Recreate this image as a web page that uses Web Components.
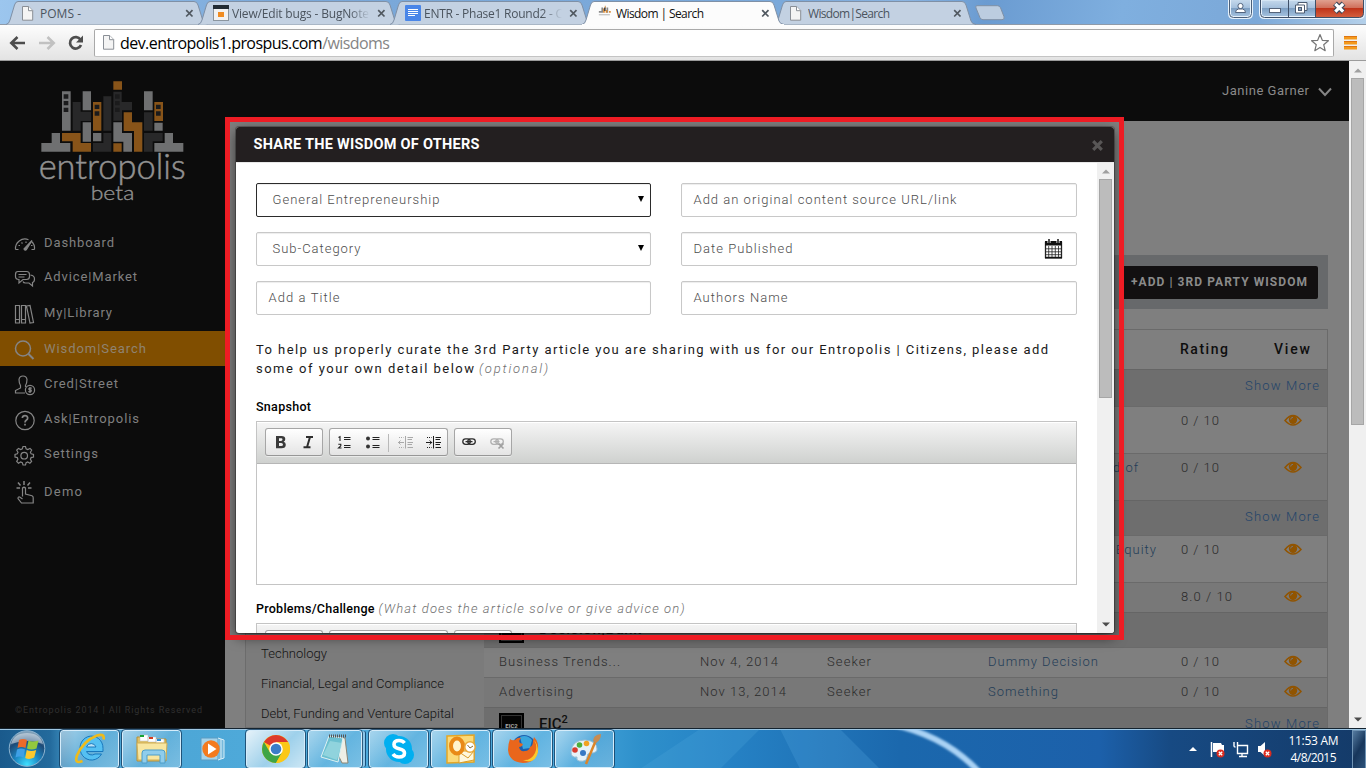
<!DOCTYPE html>
<html lang="en">
<head>
<meta charset="utf-8">
<title>Wisdom | Search</title>
<style>
html,body{margin:0;height:100%;overflow:hidden}
body{display:flex;flex-direction:column;width:1366px;height:768px;font-family:Roboto,sans-serif;background:#7f7f7f}
</style>
</head>
<body>
<tab-strip></tab-strip>
<tool-bar></tool-bar>
<page-view></page-view>
<task-bar></task-bar>
<script>
const define = (name, css, html) => customElements.define(name, class extends HTMLElement {
  connectedCallback() {
    if (this.shadowRoot) return;
    const root = this.attachShadow({ mode: 'open' });
    const tpl = document.createElement('template');
    tpl.innerHTML = `<style>:host,*{box-sizing:border-box}${css}</style>` + (typeof html === 'function' ? html(this) : html);
    root.append(tpl.content.cloneNode(true));
  }
});

/* One line of text, tracked so that it fills the width given in "w". */
const lines = [];
customElements.define('fit-text', class extends HTMLElement {
  connectedCallback() {
    if (this.shadowRoot) return;
    this.attachShadow({ mode: 'open' }).innerHTML = '<style>:host{display:inline-block;white-space:pre}</style><slot></slot>';
    lines.push(this);
  }
  fit() {
    this.style.letterSpacing = '0';
    const natural = this.getBoundingClientRect().width;
    const n = this.textContent.length;
    const space = (this.getAttribute('w') - natural) / (n - 1);
    this.style.letterSpacing = space + 'px';
    this.style.marginRight = -space + 'px';
  }
});

const pageIcon = '<svg width="13" height="15" viewBox="0 0 13 15" style="display:block"><path d="M1.5.5h6.2l4 4v9.700H1.500z" fill="#f4f4f4" stroke="#8a8f96"/><path d="M7.500.5v4.200h4.200" fill="#fff" stroke="#8a8f96"/></svg>';

/* ---------- browser tabs ---------- */
define('browser-tab', `
:host{display:block;position:relative;flex:none;width:192px;height:25px;font:12px/15px "Open Sans","Noto Sans",sans-serif;color:#4b545e}
:host([active]){z-index:2;color:#111}
.shape{position:absolute;left:-6px;top:0}
.row{position:relative;display:flex;align-items:center;height:25px;padding:1px 0 0 11px}
.icon{width:19px;flex:none}
.label{flex:1;overflow:hidden}
.fade{-webkit-mask-image:linear-gradient(90deg,#000 118px,transparent 138px)}
.close{width:9px;margin-right:8px;flex:none}`,
el => `<svg class="shape" width="206" height="25"><path d="M2 24.500Q5 24 6 20L10.500 5Q11.500 1.500 14 1.500H190Q193 1.500 194 5L199 21Q200 24 204 24.500" fill="${el.hasAttribute('active') ? '#fcfcfc' : '#c3d1e2'}" stroke="#7f90a6"/>${el.hasAttribute('active') ? '<path d="M2 24.500H204" stroke="#fcfcfc"/>' : ''}</svg>
<div class="row"><div class="icon"><slot name="icon"></slot></div><div class="label ${el.hasAttribute('long') ? 'fade' : ''}"><slot></slot></div>
<svg class="close" width="9" height="9" viewBox="0 0 9 9"><path d="M1.200 1.200 7.500 7.500M7.500 1.200 1.200 7.500" stroke="#505860" stroke-width="1.700"/></svg></div>`);

define('window-buttons', `
:host{display:flex;height:19px;margin-left:auto;padding-right:1px;position:relative;z-index:3}
svg{display:block}`,
`<svg width="137" height="20" viewBox="0 0 137 20">
<defs><linearGradient id="g" x2="0" y2="1"><stop offset="0" stop-color="#c9dcee"/><stop offset=".5" stop-color="#a3bfdc"/><stop offset=".5" stop-color="#7d9fc3"/><stop offset="1" stop-color="#a9c6e2"/></linearGradient>
<linearGradient id="r" x2="0" y2="1"><stop offset="0" stop-color="#e2a796"/><stop offset=".5" stop-color="#cf6d58"/><stop offset=".5" stop-color="#bf3319"/><stop offset="1" stop-color="#d4603f"/></linearGradient></defs>
<path d="M1.500-1v14.500q0 4 4 4h14q4 0 4-4V-1" fill="url(#g)" stroke="#e6f1fb" stroke-width="3"/><path d="M1.500-1v14.500q0 4 4 4h14q4 0 4-4V-1" fill="none" stroke="#4b5f79"/>
<circle cx="12.500" cy="6" r="2.600" fill="#fff" stroke="#53657f" /><path d="M7.500 12.500q0-3 3-3.500h4q3 .5 3 3.500z" fill="#fff" stroke="#53657f"/>
<path d="M32.500-1v14.500q0 4 4 4h95q4 0 4-4V-1z" fill="url(#g)" stroke="#e6f1fb" stroke-width="3"/>
<path d="M88-1v18.500h44q3.500-.5 3.500-4V-1z" fill="url(#r)"/>
<path d="M32.500-1v14.500q0 4 4 4h95q4 0 4-4V-1M60.500 0v17M87.500 0v17" fill="none" stroke="#3f5068"/>
<rect x="41.500" y="8.500" width="11" height="4" fill="#fff" stroke="#55647a"/>
<path d="M70 2.500h9v8h-9z" fill="#fff" stroke="#4d5c72"/><path d="M67.500 5h9v8h-9z" fill="#fff" stroke="#4d5c72"/><rect x="70.500" y="7.500" width="3" height="3" fill="#8aa4c2" stroke="#4d5c72"/>
<path d="M107 3.500 115.500 12M115.500 3.500 107 12" stroke="#3d4759" stroke-width="5.400"/><path d="M107.300 3.800 115.200 11.700M115.200 3.800 107.300 11.700" stroke="#fff" stroke-width="3.200"/></svg>`);

define('tab-strip', `
:host{display:flex;height:25px;flex:none;position:relative;padding-left:10px;border-bottom:1px solid #8f9aa8;background:linear-gradient(100deg,#9cc6ee 0,#7aa8d9 20%,#7ba9da 58%,#8ab4e1 66%,#6a9bd1 72%,#7fafdf 82%,#7ba8d8 92%,#b4d0ea 100%)}
.new{flex:none;margin:5px 0 0 4px;display:block}`,
`<browser-tab><span slot="icon">${pageIcon}</span><fit-text w="41">POMS -</fit-text></browser-tab>
<browser-tab long><svg slot="icon" width="16" height="16" viewBox="0 0 16 16" style="display:block"><rect x=".5" y=".5" width="15" height="15" fill="#f2f2f2" stroke="#8b959f"/><rect width="16" height="4" fill="#222b33"/><rect x="5" y="7" width="6" height="5" fill="#f08c22"/></svg><fit-text w="137">View/Edit bugs - BugNote</fit-text></browser-tab>
<browser-tab long><svg slot="icon" width="16" height="16" viewBox="0 0 16 16" style="display:block"><rect width="16" height="16" rx="1" fill="#4a86e8"/><path d="M3 4.500h10M3 6.500h10M3 8.500h10M3 10.500h7" stroke="#fff"/></svg><fit-text w="139">ENTR - Phase1 Round2 - C</fit-text></browser-tab>
<browser-tab active><svg slot="icon" width="16" height="16" viewBox="0 0 16 16" style="display:block"><g transform="translate(1 0) scale(.85)"><path d="M4 3h2v6H4zM10 3h2v6h-2zM1 7h3v2H1z" fill="#8a8a8a"/><path d="M6 4h2v5H6zM8 1h1v3H8zM9 6h2v3H9zM13 7h2v2h-2z" fill="#d98a35"/><path d="M7 3h2v4H7z" fill="#444"/><path d="M1 11.500h13" stroke="#aaa"/></g></svg><fit-text w="88">Wisdom | Search</fit-text></browser-tab>
<browser-tab><span slot="icon">${pageIcon}</span><fit-text w="82">Wisdom|Search</fit-text></browser-tab>
<svg class="new" width="32" height="16" viewBox="0 0 32 16"><path d="M3 .700h20.500q2 0 3 2l3.500 9q1 3-2 3H9q-2 0-3-2L2 3Q1 .700 3 .700z" fill="#bccde0" stroke="#7f90a6"/></svg>
<window-buttons></window-buttons>`);

define('tool-bar', `
:host{display:flex;align-items:center;flex:none;height:36px;padding-left:9px;border-bottom:1px solid #9b9b9b;background:linear-gradient(#fdfdfd,#e3e3e3)}
svg{display:block;flex:none}
.box{display:flex;align-items:center;width:1240px;height:28px;margin:0 10px;padding:0 3px 0 7px;border:1px solid #a9a9a9;border-bottom-color:#c4c4c4;border-radius:2px;background:#fff;font:16px/22px "Open Sans","Noto Sans",sans-serif;color:#000}
.box i{font-style:normal;color:#858585}
.star{margin-left:auto}`,
`<svg width="75" height="18" viewBox="0 0 75 18"><g fill="none"><path d="M2 9h14M8.500 3 2.300 9l6.200 6" stroke="#4d4d4d" stroke-width="2.600"/><path d="M30 9h14M38.500 3l6.200 6-6.200 6" stroke="#c1c1c1" stroke-width="2.600"/><path d="M71.500 5.700A5.700 5.700 0 1 0 72 11" stroke="#4d4d4d" stroke-width="2.700"/></g><path d="M74 1.500v7h-7z" fill="#4d4d4d"/></svg>
<div class="box">${pageIcon}<span style="width:5px"></span><fit-text w="270">dev.entropolis1.prospus.com<i>/wisdoms</i></fit-text>
<svg class="star" width="20" height="20" viewBox="0 0 20 20"><path d="M10 1.500l2.300 5.800 6.100.4-4.700 4 1.500 6-5.200-3.300-5.200 3.300 1.500-6-4.700-4 6.100-.4z" fill="#fff" stroke="#777" stroke-width="1.200" stroke-linejoin="round"/></svg></div>
<svg width="13" height="14" viewBox="0 0 13 14"><path d="M0 2h13M0 7h13M0 12h13" stroke="#f49a1c" stroke-width="3"/><path d="M0 .500h13M0 5.500h13M0 10.500h13" stroke="#dd7413"/></svg>`);

/* ---------- page ---------- */
define('scroll-track', `
:host{display:flex;flex-direction:column;align-items:center;flex:none;width:17px;background:#f0f0f0;padding:7px 0 6px}
svg{display:block;flex:none}
div{width:13px;margin-top:5px;margin-bottom:auto;background:#bcbcbc;border:1px solid #a6a6a6;flex:none}`,
el => `<svg width="8" height="5"><path d="M0 4.500 4 .500 8 4.500z" fill="#9f9f9f"/></svg><div style="height:${el.getAttribute('thumb')}px"></div><svg width="8" height="5"><path d="M0 .500h8L4 4.500z" fill="#4c4c4c"/></svg>`);

define('brand-logo', ':host{display:block;height:164px;padding-top:1px}svg{display:block}', `
<svg width="225" height="142" viewBox="0 0 675 426">
<g fill="#6f7071"><path d="M186 88h26v118h-26zM248 88h25v57h-25zM248 181h25v58h-25zM279 213h25v25h-25zM432 88h26v57h-26zM463 182h25v24h-25zM340 181h26v32h30v56h-26v-30h-30zM155 213h25v30h31v26h-87v-26h31zM494 213h25v30h31v26h-87v-26h31z"/></g>
<g fill="#282829"><path d="M218 120h24v29h31v28h-31v29h-24zM310 103h24v103h-24zM340 89h25v31h31v25h-30v31h-26zM310 213h24v56h-55v-26h31zM432 151h26v55h-26zM432 213h56v25h-30v31h-26z"/></g>
<g fill="#885419"><path d="M340 58h26v25h-26zM279 120h25v86h-25zM463 120h26v57h-26zM371 151h25v30h31v88h-25v-62h-31zM186 213h56v30h31v26h-55v-31h-32zM340 244h25v25h-25z"/></g>
<g fill="#1b1b1c"><path d="M191 97h14v13h-14zM191 117h14v13h-14zM191 137h14v13h-14zM284 128h14v13h-14zM284 148h14v13h-14zM345 97h14v13h-14zM345 117h14v13h-14zM345 137h14v13h-14zM468 128h14v13h-14zM468 148h14v13h-14z"/></g>
<text x="116" y="352" textLength="441" lengthAdjust="spacingAndGlyphs" font-family="Lato" font-weight="300" font-size="106" fill="#929292" stroke="#929292" stroke-width="1.500">entropolis</text>
<text x="272" y="414" textLength="131" lengthAdjust="spacingAndGlyphs" font-family="Lato" font-weight="300" font-size="56" fill="#929292" stroke="#929292" stroke-width="1">beta</text></svg>`);

define('nav-item', `
:host{display:flex;align-items:center;flex:none;padding-left:14px;font:400 13px/18px Roboto,sans-serif;color:#808080}
:host([active]){background:#804e00;color:#8f8371}
slot[name=icon]{display:block}
.i{width:30px;height:24px;display:flex;margin-top:2px}`,
'<div class="i"><slot name="icon"></slot></div><slot></slot>');

const navIcon = body => `<svg slot="icon" width="22" height="24" viewBox="0 0 22 24" fill="none" stroke="#858585" stroke-width="1.200" style="display:block">${body}</svg>`;
const nav = [
 ['Dashboard', 70, 35, '<path d="M1.500 17.500a9.500 9.500 0 0 1 13-9.800M17 9a9.500 9.500 0 0 1 3.500 8.500M1.500 17.500h3M17.500 17.500h3"/><path d="M10 17 18 8.500 12.500 17.500q-1.500 1.500-2.500-.5z" fill="#858585"/><path d="M4.500 13.500h1.500M7.500 10.500l1 1M12 9.500v1.500M17 13.500h1.500"/>'],
 ['Advice|Market', 93, 34, '<path d="M4 5.500h8.500q3 0 3 3v2q0 3-3 3H9L5 17v-3.500q-3.500 0-3.500-3v-2q0-3 2.500-3zM4.500 8.500h8M4.500 11h6M16.500 9q4 .5 4 4 0 3-2 3.500v3.500l-3.500-3h-3.500q-2 0-2.500-1.500"/>'],
 ['My|Library', 68, 37, '<path d="M1.500 3.500h4v17.500h-4zM7.500 3.500h4v17.500h-4zM12.500 4l3.500-.5 3.500 17-3.500.5zM1.500 17.500h4M7.500 17.500h4"/>'],
 ['Wisdom|Search', 102, 35, '<circle cx="9" cy="10.500" r="7.500" stroke-width="1.500"/><path d="M14.500 16 19.500 21" stroke-width="2"/>'],
 ['Cred|Street', 74, 35, '<path d="M11 20H1.500v-2.500l5-2.500v-2.500Q5 10 5 6.500 5.500 3 9 3t4 3.500q0 3.500-1.500 6v1.500"/><circle cx="16" cy="17" r="4.600"/><path d="M17.800 15.200h-2.500q-1 .8 0 1.600h1.500q1 .9 0 1.900h-2.500M16 14v6"/>'],
 ['Ask|Entropolis', 95, 35, '<circle cx="11" cy="12.500" r="9.200"/><path d="M8.300 10q.3-2.300 2.700-2.300t2.700 2.200q0 1.300-1.500 2.300-1.200.8-1.200 2.300M11 15.800v1.700" stroke-width="1.700"/>'],
 ['Settings', 54, 36, '<path d="M9 3.500h2.500l.6 2.400 1.600.7 2.300-1.200 1.700 1.800-1.300 2.100.7 1.500 2.400.7v2.500l-2.400.6-.7 1.700 1.200 2.200-1.700 1.700-2.200-1.200-1.600.7-.6 2.300H9l-.7-2.300-1.700-.7-2.100 1.200-1.800-1.700 1.200-2.200-.6-1.700-2.300-.6v-2.500l2.300-.7.7-1.500-1.300-2.100 1.800-1.800 2.200 1.200 1.600-.7z"/><circle cx="10.200" cy="12.700" r="3.300"/>'],
 ['Demo', 38, 40, '<path d="M8.500 15.500v-8.500q1.500-1.500 3 0v6l6.500 1.700q1.500.7 1.200 2.300v5H7.500l-3.500-4.500q0-2 1.700-1.500l2.800 2" /><path d="M10 0v4M4 1.500l2.500 3M16 1.500l-2.500 3M2.500 7h3.500M14 7h3.500" stroke-width="1.500"/>']];

define('side-nav', `
:host{display:flex;flex-direction:column;flex:none;width:225px;background:#0c0c0c}
.copy{margin:auto 0 10px 15px;font:9px/16px Roboto,sans-serif;color:#303030}`,
`<brand-logo></brand-logo>` + nav.map((n, i) => `<nav-item ${i === 3 ? 'active' : ''} style="height:${n[2]}px${i === 3 ? ';margin-top:0' : ''}">${navIcon(n[3])}<fit-text w="${n[1]}">${n[0]}</fit-text></nav-item>`).join('') +
`<div class="copy"><fit-text w="187">©Entropolis 2014 | All Rights Reserved</fit-text></div>`);

define('top-bar', `
:host{display:flex;align-items:center;justify-content:flex-end;flex:none;height:60px;padding-right:17px;background:#0c0c0c;font:13px/18px Roboto,sans-serif;color:#8a8a8a}
svg{margin:2px 0 0 9px}`,
`<fit-text w="87">Janine Garner</fit-text><svg width="14" height="10" viewBox="0 0 14 10"><path d="M1 1.500 7 8 13 1.500" fill="none" stroke="#858585" stroke-width="2"/></svg>`);

define('data-row', `
:host{display:grid;grid-template-columns:201px 127px 161px 193px 84px 1fr;flex:none;padding:5px 0 0 15px;border-top:1px solid #6a6a6a;font:300 13px/18px Roboto,sans-serif;color:#2b2b2b;background:#7f7f7f}
:host([alt]){background:#787878}
svg{margin-top:2px;margin-left:18.500px;display:block}
.l{color:#233d57}.over{justify-self:end;margin-right:var(--end,0)}`,
el => { const d = JSON.parse(el.getAttribute('data'));
 return [0, 1, 2, 3, 4].map(i => [d[i], i]).map(([c, i]) => `<div class="${i === 3 ? 'l' : ''} ${el.hasAttribute('tail') && i === 3 ? 'over' : ''}">${c ? `<fit-text w="${c[1]}">${c[0]}</fit-text>` : ''}</div>`).join('') +
 '<svg width="18" height="13" viewBox="0 0 18 13"><path d="M1 6.500Q9-3.500 17 6.500 9 15.500 1 6.500z" fill="none" stroke="#915400" stroke-width="1.500"/><circle cx="9" cy="5.700" r="4.200" fill="#915400"/><path d="M6.700 5.500q0-2.200 2.300-2.200" fill="none" stroke="#777"/></svg>'; });

define('group-row', `
:host{display:flex;flex:none;padding:0 8px 0 15px;border-top:1px solid #656565;background:#6e6e6e;font:500 15px/18px Roboto,sans-serif;color:#0e0e0e}
.icon{width:25px;height:25px;margin:5px 15px 0 0;background:#050505;display:flex;align-items:center;justify-content:center;font:700 6px/8px Roboto,sans-serif;color:#aaa;border:2px solid #000;box-shadow:inset 0 0 0 1px #333}
.name{padding-top:7px}sup{font-size:11px;line-height:0;vertical-align:6px}
.more{margin:7px 0 0 auto;font-weight:300;font-size:13px;color:#23446a}`,
el => (el.hasAttribute('name') ? `<div class="icon">${el.getAttribute('badge') || ''}</div><div class="name">${el.getAttribute('name')}</div>` : '') +
 (el.hasAttribute('more') ? '<div class="more"><fit-text w="74">Show More</fit-text></div>' : ''));

const row = (h, alt, data, tail) => `<data-row ${alt ? 'alt' : ''} ${tail ? `tail style="height:${h}px;--end:${tail}px"` : `style="height:${h}px"`} data='${JSON.stringify(data)}'></data-row>`;
define('page-content', `
:host{display:flex;flex-direction:column;flex:1;min-height:0;padding:134px 21px 0 20px;background:#7f7f7f;overflow:hidden}
.bar{display:flex;justify-content:flex-end;align-items:center;flex:none;height:54px;padding-right:10px;background:#67696b}
.btn{height:33px;padding:8px 11px 0 10px;border-radius:2px;background:#121011;color:#8b8b8b;font:700 12px/17px Roboto,sans-serif}
.cols{display:flex;margin-top:20px;flex:1;min-height:0}
.side{width:239px;flex:none;border:1px solid #6c6c6c;border-right:0;background:#7b7b7b;padding:309px 0 0 15px;font:300 13px/30px Roboto,sans-serif;color:#121212}
.side div{height:30px}
.table{flex:1;display:flex;flex-direction:column;border-right:1px solid #6a6a6a}
.head{display:grid;grid-template-columns:696px 94px 1fr;flex:none;height:40px;border-top:1px solid #6a6a6a;font:500 14px/38px Roboto,sans-serif;color:#0e0e0e}`,
`<div class="bar"><div class="btn"><fit-text w="176">+ADD | 3RD PARTY WISDOM</fit-text></div></div>
<div class="cols"><div class="side"><div><fit-text w="66">Technology</fit-text></div><div><fit-text w="183">Financial, Legal and Compliance</fit-text></div><div><fit-text w="193">Debt, Funding and Venture Capital</fit-text></div></div>
<div class="table"><div class="head"><span></span><div><fit-text w="48">Rating</fit-text></div><div><fit-text w="36">View</fit-text></div></div>
<group-row more style="height:37px"></group-row>` +
row(47, 0, [0,0,0,0,['0 / 10',38]]) + row(47, 1, [0,0,0,['d of',25],['0 / 10',38]], 43) +
`<group-row more style="height:35px"></group-row>` +
row(47, 0, [0,0,0,['Equity',40],['0 / 10',38]], 25) + row(30, 1, [0,0,0,0,['8.0 / 10',51]]) +
`<group-row style="height:35px" name="<fit-text w='102'>Decision|Bank</fit-text>"></group-row>` +
row(30, 0, [['Business Trends...',121],['Nov 4, 2014',78],['Seeker',44],['Dummy Decision',110],['0 / 10',38]]) +
row(30, 1, [['Advertising',74],['Nov 13, 2014',86],['Seeker',44],['Something',70],['0 / 10',38]]) +
`<group-row more style="height:35px" name="EIC<sup>2</sup>" badge="EIC2"></group-row></div></div>`);

/* ---------- dialog ---------- */
define('form-field', `
:host{display:flex;align-items:center;height:34px;padding:0 6px 1px 11.500px;border:1px solid #c8c8c8;border-radius:2px;background:#fff;box-shadow:inset 0 1px 1px rgba(0,0,0,.075);font:300 13px/18px Roboto,sans-serif;color:#4c4c4c}
:host([select]){padding-left:15.500px;padding-bottom:0}
:host([focus]){border-color:#2b2b2b}
svg{margin-left:auto}`,
el => '<slot></slot>' + (el.hasAttribute('select') ? '<svg width="6" height="6" style="margin-top:-2px"><path d="M0 0h6L3 6z" fill="#000"/></svg>' : '') +
 (el.hasAttribute('date') ? '<svg width="20" height="20" viewBox="0 0 20 20" style="margin:1px 6px 0 auto"><path d="M1.500 3.500h16v15h-16z" fill="#fff" stroke="#222" stroke-width="1.300"/><path d="M1 2h17v4.500H1z" fill="#111"/><path d="M5 0v4M14 0v4" stroke="#fff" stroke-width="3"/><path d="M5 0v4M14 0v4" stroke="#111" stroke-width="1.500"/><path d="M4.700 7v11M8 7v11M11.300 7v11M14.500 7v11M2 9.800h15M2 12.800h15M2 15.700h15" stroke="#222" stroke-width=".8"/><path d="M1 18.800h17" stroke="#111" stroke-width="1.500"/></svg>' : ''));

define('rich-editor', `
:host{display:flex;flex-direction:column;flex:none;height:164px;border:1px solid #c4c4c4;background:#fff}
.bar{display:flex;gap:6px;flex:none;height:42px;padding:6px 8px;border-bottom:1px solid #b6b6b6;background:linear-gradient(#f5f5f5,#cfd1cf);box-shadow:inset 0 1px 0 #fff}
.g{height:28px;border:1px solid #a6a6a6;border-bottom-color:#979797;border-radius:3px;background:linear-gradient(#fff,#e4e4e4);box-shadow:0 1px 0 rgba(255,255,255,.5)}
svg{display:block}`,
`<div class="bar">
<div class="g"><svg width="56" height="26" viewBox="0 0 56 26"><path fill-rule="evenodd" d="M10 7h5.500q3.800 0 3.800 3 0 2-1.700 2.700 2.200.6 2.200 3 0 3.500-4.300 3.500H10zM13 9.200v2.700h2q1.500 0 1.500-1.400T15 9.200zM13 14v3h2.200q1.800 0 1.800-1.500T15.200 14z" fill="#3a3a3a"/><path d="M40 8h7M37.500 18.300h7M44 8l-3 10.300" stroke="#2e2e2e" stroke-width="2"/></svg></div>
<div class="g"><svg width="117" height="26" viewBox="0 0 117 26"><path d="M14 8.500h6.500M14 10.500h6.500M14 16.500h6.500M14 18.500h6.500" stroke="#222"/><path d="M8.500 8.500l1.500-.8v4.300M8.300 15.200h2.500v1.600L8.500 19h3" fill="none" stroke="#222" stroke-width="1.100"/><circle cx="38" cy="9.500" r="2" fill="#333"/><circle cx="38" cy="17.500" r="2" fill="#333"/><path d="M42.500 8.500h7M42.500 10.500h7M42.500 16.500h7M42.500 18.500h7" stroke="#222"/><path d="M58.500 5v18" stroke="#b9b9b9"/>
<g stroke="#a9a9a9" fill="none"><path d="M68 13.500h6M70.500 11.500l-2 2 2 2M75.500 7v12.500"/><path d="M77.500 8.500h5.500M77.500 10.500h4.500M77.500 13.500h5.500M77.500 15.500h4.500M77.500 18.500h5.500"/><path d="M69 8.500h4.500M69 18.500h4.500" stroke-dasharray="1 1"/></g>
<g stroke="#1d1d1d" fill="none"><path d="M96 13.500h6M99.700 11.500l2 2-2 2M103.500 7v12.500"/><path d="M105.500 8.500h5.500M105.500 10.500h4.500M105.500 13.500h5.500M105.500 15.500h4.500M105.500 18.500h5.500"/><path d="M97 8.500h4.500M97 18.500h4.500" stroke-dasharray="1 1"/></g></svg></div>
<div class="g"><svg width="56" height="26" viewBox="0 0 56 26"><g fill="none" stroke="#2c2c2c" stroke-width="1.300"><rect x="7.800" y="9.800" width="7.500" height="5.600" rx="2.800"/><rect x="12.800" y="9.800" width="7.500" height="5.600" rx="2.800"/></g><path d="M10.500 12.600h7" stroke="#2c2c2c" stroke-width="1.300"/><g fill="none" stroke="#b0b0b0" stroke-width="1.300"><rect x="35.800" y="9.800" width="7.500" height="5.600" rx="2.800"/><rect x="40.800" y="9.800" width="7.500" height="5.600" rx="2.800"/><path d="M38.500 12.600h6"/></g><path d="M43.500 14.500l5 5M48.500 14.500l-5 5" stroke="#a0a0a0" stroke-width="1.700"/></svg></div></div>`);

define('share-dialog', `
:host{display:flex;flex-direction:column;width:878px;height:506px;border-radius:3px;overflow:hidden;background:#fff;box-shadow:0 4px 13px rgba(0,0,0,.6),0 0 0 1px rgba(0,0,0,.25)}
header{display:flex;align-items:center;justify-content:space-between;flex:none;height:35px;padding:0 11px 0 17.500px;background:#231f20;color:#fff;font:700 14.500px/20px Roboto,sans-serif}
header svg{margin-top:2px}
.wrap{display:flex;flex:1;min-height:0;border-top:1px solid #e8e8e8}
.body{flex:1;display:flex;flex-direction:column;padding:20px 20px 0;overflow:hidden;font:13px/19px Roboto,sans-serif;color:#1a1a1a}
.grid{display:grid;grid-template-columns:395px 396px;gap:15px 30px;flex:none}
.note{margin-top:25px;height:38px;flex:none;white-space:nowrap}
.note em,.lab em{font-weight:300;color:#6f6f6f}
.lab{height:19px;flex:none;font-weight:500;font-size:12.500px;white-space:nowrap;color:#000}
em{display:inline-block}`,
`<header><fit-text w="226">SHARE THE WISDOM OF OTHERS</fit-text><svg width="11" height="11" viewBox="0 0 11 11"><path d="M1.200 1.200 9.800 9.800M9.800 1.200 1.200 9.800" stroke="#585656" stroke-width="3.200"/></svg></header>
<div class="wrap"><div class="body"><div class="grid">
<form-field select focus><fit-text w="167">General Entrepreneurship</fit-text></form-field>
<form-field><fit-text w="263">Add an original content source URL/link</fit-text></form-field>
<form-field select><fit-text w="88">Sub-Category</fit-text></form-field>
<form-field date><fit-text w="99">Date Published</fit-text></form-field>
<form-field><fit-text w="71">Add a Title</fit-text></form-field>
<form-field><fit-text w="94">Authors Name</fit-text></form-field></div>
<div class="note"><fit-text w="792">To help us properly curate the 3rd Party article you are sharing with us for our Entropolis | Citizens, please add</fit-text><br><fit-text w="218">some of your own detail below</fit-text><em style="margin-left:5px"><fit-text w="69">(optional)</fit-text></em></div>
<div class="lab" style="margin:19px 0 5px"><fit-text w="55">Snapshot</fit-text></div>
<rich-editor></rich-editor>
<div class="lab" style="margin:14px 0 5px"><fit-text w="118.500">Problems/Challenge</fit-text><em style="margin-left:4px;font-size:13px"><fit-text w="306">(What does the article solve or give advice on)</fit-text></em></div>
<rich-editor></rich-editor></div>
<scroll-track thumb="219" style="padding-top:6px"></scroll-track></div>`);

define('page-view', `
:host{display:flex;flex:none;height:667px;position:relative;overflow:hidden}
main{flex:1;display:flex;flex-direction:column;min-width:0}
share-dialog{position:absolute;left:236px;top:66px}
.mark{position:absolute;left:225px;top:56px;width:899px;height:523px;border:5px solid #ee1c24}`,
`<side-nav></side-nav><main><top-bar></top-bar><page-content></page-content></main><scroll-track thumb="347"></scroll-track>
<share-dialog></share-dialog><div class="mark"></div>`);

/* ---------- taskbar ---------- */
define('task-button', `
:host{display:flex;align-items:center;justify-content:center;flex:none;width:59px;height:38px;margin-right:3px}
:host([open]){border:1px solid #d5ecfa;border-radius:3px;outline:1px solid rgba(16,55,90,.75);outline-offset:0;background:linear-gradient(135deg,rgba(255,255,255,.5),rgba(255,255,255,.12) 55%,rgba(255,255,255,.25))}
:host([front]){background:linear-gradient(135deg,rgba(255,255,255,.85),rgba(255,255,255,.45) 55%,rgba(255,255,255,.7))}
:host([stack]){width:54px;margin-right:7px;box-shadow:4px 0 0 -1px #8cc6e8,5px 0 0 -1px #17507c}`, '<slot></slot>');

define('task-bar', `
:host{display:flex;align-items:flex-start;position:relative;flex:none;height:40px;border-top:1px solid #14232f;box-shadow:inset 0 1px 0 #9fc7e3;padding-top:1px;overflow:hidden;background:linear-gradient(90deg,#1a5a8c 0,#236a9c 50px,#4ba3d3 75px,#4fabdb 300px,#4ba9dd 560px,#2e90cb 640px,#2683c6 720px,#1b68ad 900px,#1c60aa 1100px,#174a83 1170px,#143a68 1366px)}
.bg{position:absolute;inset:0}
task-button,.tray,.orb{position:relative}
.orb{flex:none;width:60px;height:38px;display:block}
.tray{display:flex;align-items:center;margin-left:auto;height:38px;color:#fff;font:12px/17px "Open Sans","Noto Sans",sans-serif}
.clock{text-align:center;width:75px;height:34px;padding-right:2px}
.clock div{height:17px}
.desk{width:14px;height:39px;border:1px solid #6f93b4;background:linear-gradient(120deg,#557ba0,#17365b 50%,#2c5179)}`,
`<svg class="bg" width="1366" height="39"><defs><filter id="b"><feGaussianBlur stdDeviation="1.200"/></filter></defs><path d="M640 40 700 0h60l-40 40z" fill="#4ea6dd" opacity=".25"/><path d="M800 40 780 0h60l40 40z" fill="#5fb2e6" opacity=".22"/><path d="M890-5Q945 6 980 44" fill="none" stroke="#a9d2f4" stroke-width="6" filter="url(#b)"/></svg>
<svg class="orb" width="60" height="38" viewBox="0 0 60 38"><defs><radialGradient id="a" cx=".5" cy=".95" r=".9"><stop offset="0" stop-color="#3fe0ff"/><stop offset=".4" stop-color="#1b86c2"/><stop offset=".75" stop-color="#1d4a77"/><stop offset="1" stop-color="#7f9fb8"/></radialGradient></defs><circle cx="27" cy="18.500" r="17.800" fill="url(#a)" stroke="#8db4d0"/><path d="M11 14Q14 3 27 3t16 11q-15-6-32 0z" fill="#fff" opacity=".45"/><path d="M19 10q4-2 8 0l-1.500 8q-4-2-8 0z" fill="#ec6a2a"/><path d="M28.500 10.500q4 2.200 10 0l-2 8q-5 2-9.500 0z" fill="#93c83e"/><path d="M17 19.500q4-2 8 0l-1.500 8q-4-2-8 0z" fill="#3fa0e6"/><path d="M26.700 20q4.500 2 9.500 0l-2 7.500q-5 2.500-9 .500z" fill="#fdc82e"/></svg>
<task-button open><svg width="34" height="34" viewBox="0 0 34 34"><path d="M30 16.500A11.500 12 0 1 0 28.500 22h-6.500a5.500 5 0 0 1-8.500-2.500H30z" fill="#55c0f2" stroke="#1878bd"/><path d="M13.500 15a5 5 0 0 1 9.500 0z" fill="#b9e2f8" stroke="#1878bd"/><path d="M30.500 7.500Q32 1 24 3.500 10 9 4 23.500 1 32.500 9.500 29" fill="none" stroke="#eebb1c" stroke-width="2.700"/></svg></task-button>
<task-button open><svg width="34" height="32" viewBox="0 0 34 32"><path d="M2 4h9l2 2h18v22H2z" fill="#e2c265" stroke="#b4903b"/><path d="M5 2h8v6H5zM13 4h8v5h-8zM21 6h8v4h-8z" fill="#fff" stroke="#bbb" stroke-width=".5"/><path d="M5 2h4v2H5z" fill="#19a334"/><path d="M14 4h4v2h-4z" fill="#d33b20"/><path d="M22 6h4v2h-4z" fill="#2a8ed8"/><path d="M2 10h30l-1 17H3z" fill="#f8e6a0" stroke="#cfae56"/><path d="M7 30V20q0-3 3-3h17q3 0 3 3v10h-5v-8H12v8z" fill="#8fcdec" stroke="#4c9dc9"/></svg></task-button>
<task-button><svg width="30" height="26" viewBox="0 0 30 26"><path d="M2 2h17v22H2z" fill="#a5d3ea" stroke="#5a9cc3"/><path d="M19 2l3 1v20l-3 1M22 3l3 1v18l-3 1" fill="#77b9dc" stroke="#d7eef8"/><circle cx="12" cy="13" r="8.700" fill="#f37a1e"/><path d="M9 7.500v11l8.500-5.500z" fill="#fff"/></svg></task-button>
<task-button open front><svg width="30" height="30" viewBox="0 0 30 30"><circle cx="15" cy="15" r="14" fill="#fbc818"/><path d="M15 15 2.900 8A14 14 0 0 1 27.100 8H15z" fill="#dd3a2c"/><path d="M2.900 8A14 14 0 0 0 15 29l6-10.500-12 0z" fill="#3ea546"/><path d="M15 8H27.100A14 14 0 0 1 15 29l6-10.500z" fill="#fbc818"/><circle cx="15" cy="15" r="6.800" fill="#fff"/><circle cx="15" cy="15" r="5.300" fill="#3b7dc8"/></svg></task-button>
<task-button open stack><svg width="34" height="32" viewBox="0 0 34 32"><path d="M11 3l16 2 3 25-6 0z" fill="#efefe6" stroke="#8a8574"/><path d="M11 3 25 5 20 29 3 24z" fill="#6cc0d0" stroke="#dff1f3"/><path d="M12 8 24 10 19 27 5 22z" fill="#a9dfe6" opacity=".6"/><path d="M11 3h17" stroke="#555" stroke-width="3" stroke-dasharray="1 1"/></svg></task-button>
<task-button open><svg width="32" height="32" viewBox="0 0 32 32"><circle cx="10" cy="10" r="9" fill="#00aff0"/><circle cx="22" cy="22" r="9" fill="#00aff0"/><circle cx="16" cy="16" r="13" fill="#00aff0"/><path d="M21.500 10Q19.500 7.500 16 7.500q-5 0-5 4 0 3 5 4.200 5.500 1.300 5.500 4.300 0 4-5.500 4-4 0-6-3" fill="none" stroke="#fff" stroke-width="3.600"/></svg></task-button>
<task-button open><svg width="32" height="32" viewBox="0 0 32 32"><path d="M2 3 29 2v27L2 30z" fill="#fbd978" stroke="#e5a725" stroke-width="1.500"/><path d="M14 18h15v9l-15 3z" fill="#fff8dc" stroke="#d99e2c"/><path d="M14 19l9 6 6-7" fill="none" stroke="#d99e2c"/><ellipse cx="12" cy="13" rx="6" ry="7.500" fill="#fff3cd" stroke="#e98917" stroke-width="4"/><circle cx="25" cy="14" r="5.200" fill="#fff" stroke="#e9a93b" stroke-width="1.500"/><path d="M22.500 12l2.500 3 3-2" fill="none" stroke="#8a6a30"/></svg></task-button>
<task-button open><svg width="32" height="32" viewBox="0 0 32 32"><circle cx="17" cy="14" r="12" fill="#1c5fae"/><path d="M13 4Q20 1 25 7l-2 8-7 1z" fill="#39a6dc"/><path d="M3 6q2 2 5 1 3-3 6-2-3 3-1 5l3 1q-1 3-4 3 1 5 6 4 4 0 5-4 3-1 3-6l1-4q5 5 4 13-2 13-15 13Q2 29 1 17q0-6 2-11z" fill="#e9661c"/><path d="M27 7q4 6 1 13-4 8-12 7 12 5 15-8 0-8-4-12z" fill="#fbc92c"/></svg></task-button>
<task-button open><svg width="34" height="32" viewBox="0 0 34 32"><path d="M3 19Q4 7 17 7q12 1 12 9 0 4-6 4-4 0-4 4 0 5-8 4-3-1-2-4-6 1-6-5z" fill="#e6f2f8" stroke="#9cbfd2"/><circle cx="7" cy="17" r="2.800" fill="#d83b2d"/><circle cx="11.500" cy="12" r="2.800" fill="#4cae3c"/><circle cx="18.500" cy="10.500" r="2.800" fill="#f2a221"/><circle cx="15" cy="20" r="3" fill="#3779c4"/><path d="M28 7 18 31" stroke="#dc8528" stroke-width="2.500"/><path d="M25 8q0-6 8-7 0 6-5 9z" fill="#c78c52"/></svg></task-button>
<div class="tray"><svg width="92" height="22" viewBox="0 0 92 22"><path d="M4 13h8L8 9z" fill="#fff"/><path d="M26.500 4v15" stroke="#fff" stroke-width="1.500"/><path d="M28 5h8l1 2h2v7H28z" fill="#fff"/><circle cx="35.500" cy="15.500" r="4" fill="#db2c20"/><path d="M33.800 13.800l3.400 3.400M37.200 13.800l-3.400 3.400" stroke="#fff" stroke-width="1.300"/><path d="M52.500 7.500h10v8h-10zM57 16v2.500M54 18.500h8M49 4v4q0 1 1.500 1M52.500 4v3" fill="none" stroke="#fff" stroke-width="1.400"/><path d="M73 8h2.500L80 4v14l-4.500-4H73z" fill="#fff"/><circle cx="82.500" cy="15.500" r="4" fill="#db2c20"/><path d="M80.800 13.800l3.400 3.400M84.200 13.800l-3.400 3.400" stroke="#fff" stroke-width="1.300"/></svg>
<div class="clock"><div><fit-text w="50">11:53 AM</fit-text></div><div><fit-text w="46">4/8/2015</fit-text></div></div><div class="desk"></div></div>`);

lines.forEach(line => line.fit());
</script>
</body>
</html>
